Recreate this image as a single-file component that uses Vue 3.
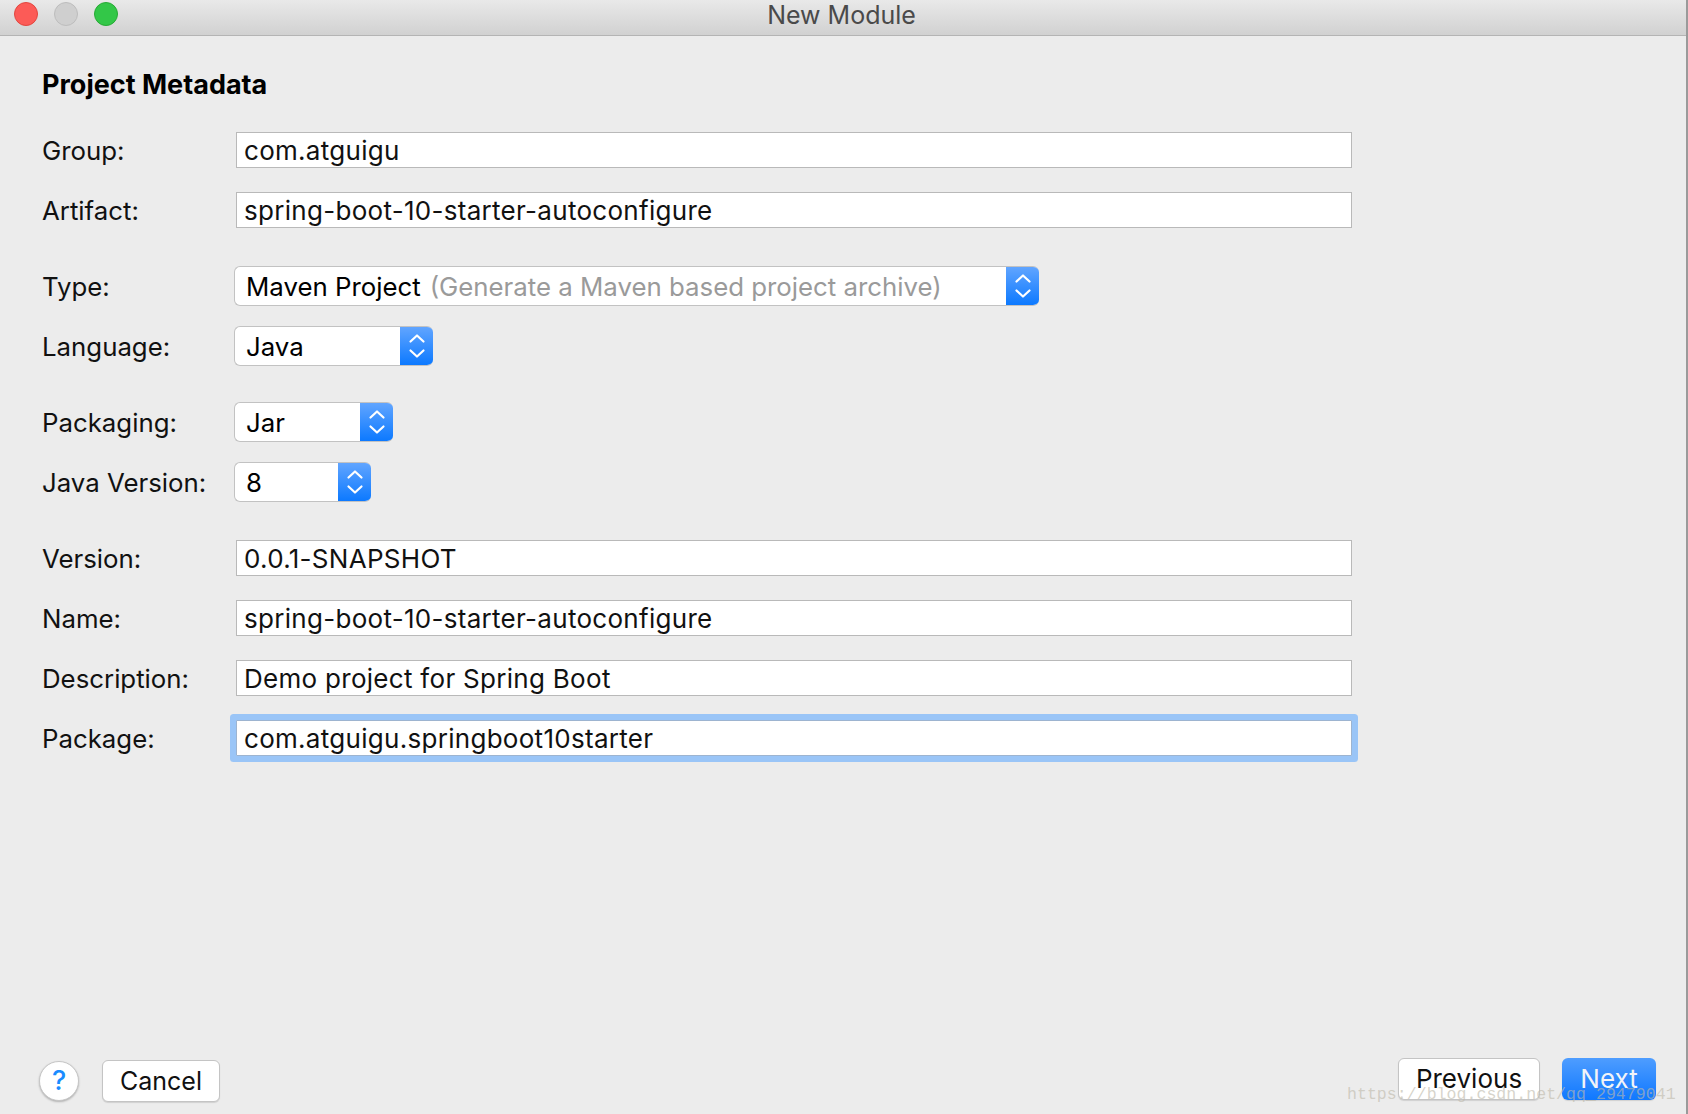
<script setup>
const rows = [
  { kind: 'input', label: 'Group:', value: 'com.atguigu', gap: 'g0' },
  { kind: 'input', label: 'Artifact:', value: 'spring-boot-10-starter-autoconfigure', gap: 'g24' },
  { kind: 'select', label: 'Type:', value: 'Maven Project', hint: '(Generate a Maven based project archive)', width: 805, gap: 'g38' },
  { kind: 'select', label: 'Language:', value: 'Java', width: 199, gap: 'g20' },
  { kind: 'select', label: 'Packaging:', value: 'Jar', width: 159, gap: 'g36' },
  { kind: 'select', label: 'Java Version:', value: '8', width: 137, gap: 'g20' },
  { kind: 'input', label: 'Version:', value: '0.0.1-SNAPSHOT', gap: 'g38' },
  { kind: 'input', label: 'Name:', value: 'spring-boot-10-starter-autoconfigure', gap: 'g24' },
  { kind: 'input', label: 'Description:', value: 'Demo project for Spring Boot', gap: 'g24' },
  { kind: 'input', label: 'Package:', value: 'com.atguigu.springboot10starter', gap: 'g24', focus: true },
]
</script>

<template>
  <div class="window">
    <header class="titlebar">
      <div class="lights">
        <span class="light red"></span>
        <span class="light gray"></span>
        <span class="light green"></span>
      </div>
      <div class="title">New Module</div>
    </header>

    <main class="content">
      <h1 class="heading">Project Metadata</h1>
      <div class="form">
        <div v-for="row in rows" :key="row.label" class="row" :class="row.gap">
          <label class="label">{{ row.label }}</label>
          <div v-if="row.kind === 'input'" class="input" :class="{ focused: row.focus }">{{ row.value }}</div>
          <div v-else class="select" :style="{ width: row.width + 'px' }">
            <div class="select-text">{{ row.value }}<span v-if="row.hint" class="hint">{{ row.hint }}</span></div>
            <div class="select-btn">
              <svg width="20" height="26" viewBox="0 0 20 26" fill="none" stroke="#fff" stroke-width="2.2" stroke-linecap="round" stroke-linejoin="round">
                <path d="M3.5 8.5 10 2.5l6.5 6" />
                <path d="M3.5 17.5 10 23.5l6.5-6" />
              </svg>
            </div>
          </div>
        </div>
      </div>
    </main>

    <footer class="footer">
      <div class="footer-left">
        <button class="help">?</button>
        <button class="btn cancel">Cancel</button>
      </div>
      <div class="footer-right">
        <button class="btn previous">Previous</button>
        <button class="btn next">Next</button>
      </div>
    </footer>

    <div class="watermark">https://blog.csdn.net/qq_29479041</div>
  </div>
</template>

<style>
html, body { margin: 0; background: #ececec; }
</style>

<style scoped>
.window {
  position: relative;
  width: 1688px;
  height: 1114px;
  box-sizing: border-box;
  display: flex;
  flex-direction: column;
  background: #ececec;
  border-right: 2px solid #9a9a9a;
  overflow: hidden;
  font-family: Inter, "Liberation Sans", sans-serif;
  font-size: 26px;
  color: #111;
}
.titlebar {
  position: relative;
  flex: none;
  height: 36px;
  box-sizing: border-box;
  display: flex;
  align-items: center;
  justify-content: center;
  background: linear-gradient(#e9e9e9, #d1d1d1);
  border-bottom: 1px solid #b4b4b4;
}
.lights {
  position: absolute;
  left: 14px;
  top: 2px;
  display: flex;
  gap: 16px;
}
.light {
  width: 24px;
  height: 24px;
  box-sizing: border-box;
  border-radius: 50%;
  border: 1px solid;
}
.red { background: #fc5b57; border-color: #e2463f; }
.gray { background: #cfcfcf; border-color: #bdbdbd; }
.green { background: #33c748; border-color: #27aa35; }
.title {
  margin-top: -6px;
  margin-left: -3px;
  color: #4a4a4a;
  font-size: 25px;
}
.content {
  flex: 1;
  padding: 34px 0 0 42px;
}
.heading {
  margin: 0;
  height: 50px;
  font-size: 27px;
  line-height: 50px;
  margin-top: -10px;
  font-weight: 700;
  color: #000;
}
.form {
  margin-top: 22px;
  display: flex;
  flex-direction: column;
}
.row {
  display: flex;
  align-items: center;
}
.g0 { margin-top: 0; }
.g20 { margin-top: 20px; }
.g24 { margin-top: 24px; }
.g36 { margin-top: 36px; }
.g38 { margin-top: 38px; }
.label {
  width: 192px;
  flex: none;
  font-size: 25.8px;
}
.input {
  width: 1116px;
  height: 36px;
  margin-left: 2px;
  box-sizing: border-box;
  padding-left: 7px;
  border: 1px solid #b9b9b9;
  background: #fff;
  line-height: 36px;
  letter-spacing: 0.29px;
}
.focused {
  border-color: #9db4d0;
  box-shadow: 0 0 0 6px #9ac5f7;
  border-radius: 1px;
}
.select {
  height: 40px;
  box-sizing: border-box;
  display: flex;
  border: 1px solid #c2c2c2;
  border-right: none;
  border-radius: 6px;
  background: #fff;
  overflow: hidden;
  font-size: 25.8px;
}
.select-text {
  flex: 1;
  min-width: 0;
  padding-left: 11px;
  line-height: 40px;
  white-space: nowrap;
  color: #000;
}
.hint {
  margin-left: 9px;
  color: #9a9a9a;
}
.select-btn {
  flex: none;
  width: 33px;
  margin: -1px 0;
  display: flex;
  align-items: center;
  justify-content: center;
  background: linear-gradient(#63a6ff, #0a78ff);
}
.footer {
  position: absolute;
  left: 0;
  right: 0;
  top: 1058px;
  display: flex;
  justify-content: space-between;
}
.footer-left {
  display: flex;
  align-items: center;
  margin-left: 39px;
  gap: 23px;
  padding-top: 2px;
}
.footer-right {
  display: flex;
  gap: 22px;
  margin-right: 30px;
}
button {
  font-family: inherit;
  font-size: 26px;
  padding: 0;
  margin: 0;
  box-sizing: border-box;
}
.help {
  width: 40px;
  height: 40px;
  border-radius: 50%;
  border: 1px solid #c6c6c6;
  background: #fff;
  color: #1a8cff;
  font-weight: 500;
  font-size: 27px;
  line-height: 36px;
  box-shadow: 0 1px 2px rgba(0, 0, 0, 0.25);
}
.btn {
  height: 42px;
  border-radius: 6px;
  border: 1px solid #c4c4c4;
  background: #fff;
  color: #111;
  line-height: 38px;
  box-shadow: 0 1px 1px rgba(0, 0, 0, 0.12);
}
.cancel { width: 118px; font-size: 25px; }
.previous { width: 142px; }
.next {
  width: 94px;
  border: none;
  background: linear-gradient(#4e9dff, #0f78ff);
  color: #f2f4f8;
}
.watermark {
  position: absolute;
  left: 1347px;
  top: 1085px;
  font-family: "Liberation Mono", monospace;
  font-size: 16.6px;
  line-height: 20px;
  color: rgba(190, 185, 170, 0.62);
  white-space: nowrap;
  pointer-events: none;
}
</style>
